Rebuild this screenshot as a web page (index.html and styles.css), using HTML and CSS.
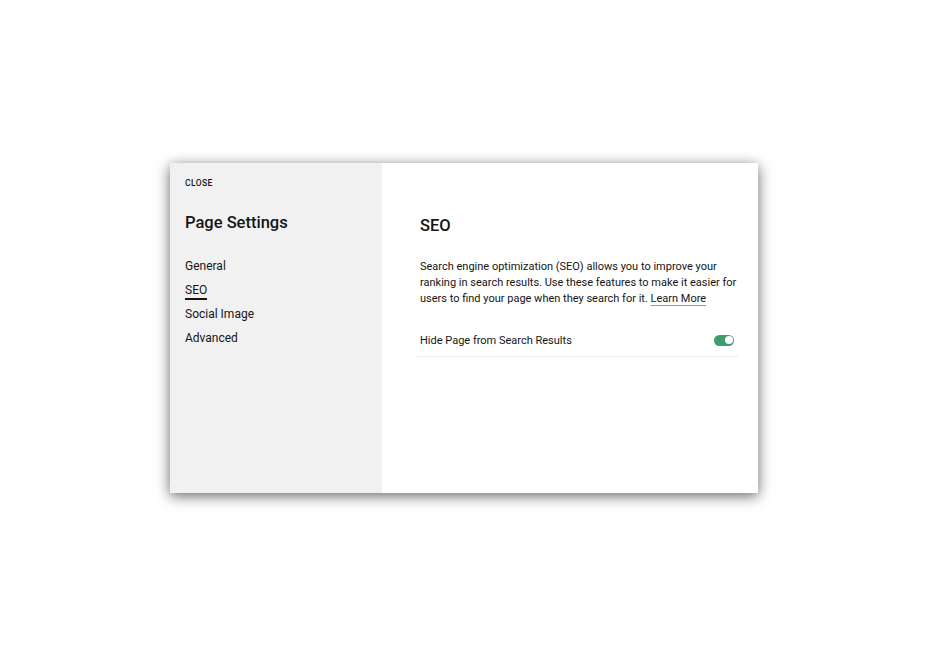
FILE: index.html
```html
<!DOCTYPE html>
<html lang="en">
<head>
    <meta charset="UTF-8">
    <title>Page Settings</title>
    <link rel="stylesheet" href="styles.css">
</head>
<body>
    <div class="page">
        <div class="panel">
            <aside class="sidebar">
                <div class="close">CLOSE</div>
                <h1>Page Settings</h1>
                <nav class="menu">
                    <a href="#">General</a>
                    <a href="#" class="active">SEO</a>
                    <a href="#">Social Image</a>
                    <a href="#">Advanced</a>
                </nav>
            </aside>
            <main class="content">
                <h2>SEO</h2>
                <p class="intro">
                    Search engine optimization (SEO) allows you to improve your
                    ranking in search results. Use these features to make it easier for
                    users to find your page when they search for it. <a href="#">Learn More</a>
                </p>
                <div class="option">
                    <span>Hide Page from Search Results</span>
                    <span class="toggle"><span class="knob"></span></span>
                </div>
            </main>
        </div>
    </div>
</body>
</html>
```

FILE: styles.css
```css
body {
    margin: 0;
    background-color: #ffffff;
    font-family: Roboto, "Liberation Sans", Arial, sans-serif;
    color: #151515;
}

.page {
    padding: 163px 0 120px 170px;
}

.panel {
    display: flex;
    width: 588px;
    height: 330px;
    background-color: #ffffff;
    box-shadow: 0 3px 13px rgba(0, 0, 0, 0.6);
}

.sidebar {
    width: 212px;
    background-color: #f1f1f1;
    padding: 15px 15px 0;
    box-sizing: border-box;
}

.close {
    font-size: 8.5px;
    font-weight: 500;
    letter-spacing: 0.4px;
    line-height: 10px;
}

h1 {
    font-size: 16.5px;
    font-weight: 500;
    margin: 25px 0 0;
    line-height: 20px;
}

.menu {
    display: flex;
    flex-direction: column;
    align-items: flex-start;
    gap: 8px;
    margin-top: 25px;
}

.menu a {
    color: #151515;
    text-decoration: none;
    font-size: 12px;
    line-height: 16px;
}

.menu a.active {
    box-shadow: 0 2px 0 #151515;
}

.content {
    flex: 1;
    padding: 53px 14px 0 34px;
}

h2 {
    font-size: 16.5px;
    font-weight: 500;
    margin: 0 0 0 4px;
    line-height: 20px;
}

.intro {
    font-size: 11px;
    line-height: 16px;
    margin: 23px 0 0 4px;
    width: 322px;
}

.intro a {
    color: #151515;
    text-decoration: underline;
    text-decoration-color: #999;
    text-underline-offset: 3px;
}

.option {
    display: flex;
    justify-content: space-between;
    align-items: center;
    padding: 0 4px;
    height: 32px;
    width: 314px;
    margin-top: 17px;
    border-bottom: 1px solid #ececec;
    font-size: 11px;
}

.toggle {
    display: flex;
    justify-content: flex-end;
    align-items: center;
    width: 20px;
    height: 11px;
    border-radius: 6px;
    background-color: #3d9b6d;
    padding: 0 1.5px;
    box-sizing: border-box;
}

.knob {
    width: 8px;
    height: 8px;
    border-radius: 50%;
    background-color: #ffffff;
}
```
